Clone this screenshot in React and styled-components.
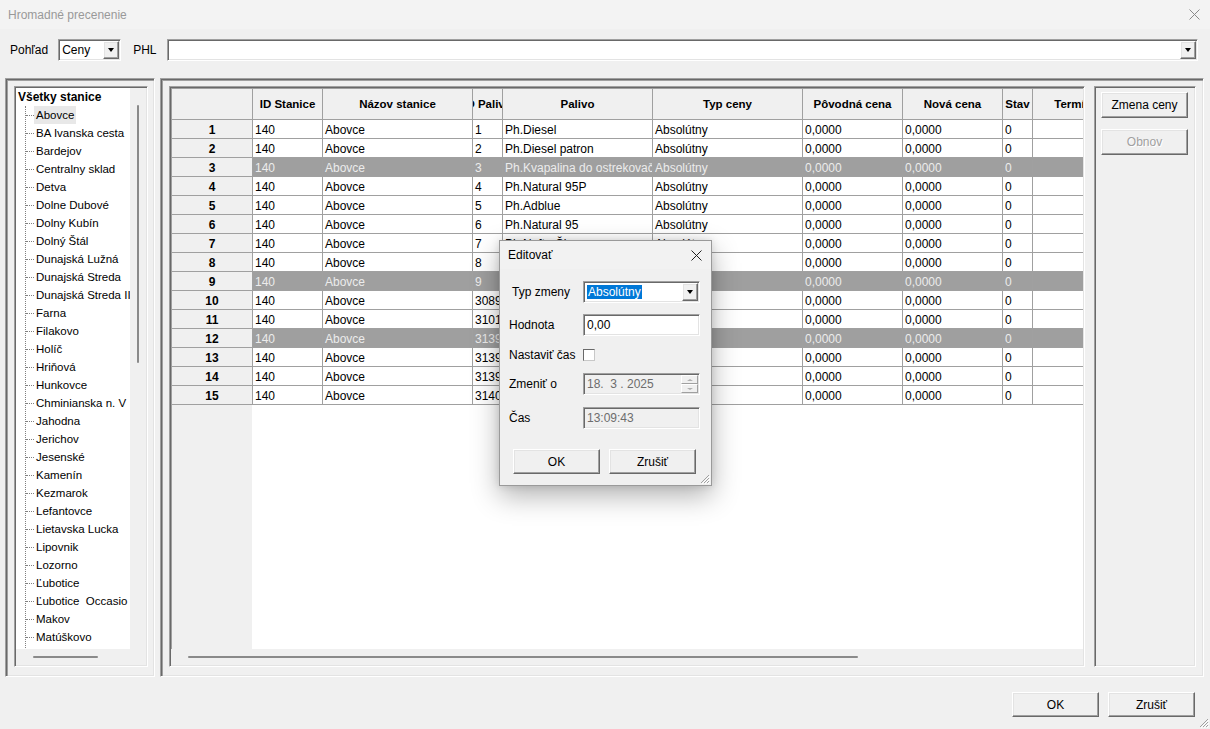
import React from 'react';
import styled, { createGlobalStyle, css } from 'styled-components';

const Global = createGlobalStyle`
  html, body { margin: 0; padding: 0; background: #f0f0f0; }
  body { font-family: "Liberation Sans", Arial, sans-serif; font-size: 12px; color: #000; }
  * { box-sizing: border-box; }
`;

const sunken = css`
  border: 1px solid;
  border-color: #a0a0a0 #fff #fff #a0a0a0;
  box-shadow: inset 1px 1px #696969, inset -1px -1px #e3e3e3;
`;

const raised = css`
  background: #f0f0f0;
  border: 1px solid;
  border-color: #fff #696969 #696969 #fff;
  box-shadow: inset -1px -1px #a0a0a0, inset 1px 1px #e3e3e3;
`;

const Window = styled.div`
  position: relative;
  width: 1210px;
  height: 729px;
  display: flex;
  flex-direction: column;
  background: #f0f0f0;
  overflow: hidden;
`;

const TitleBar = styled.div`
  height: 29px;
  flex-shrink: 0;
  background: #f3f3f3;
  display: flex;
  align-items: center;
  justify-content: space-between;
  padding: 0 10px 0 8px;
  color: #999;
  font-size: 12px;
`;

const Toolbar = styled.div`
  height: 49px;
  flex-shrink: 0;
  display: flex;
  align-items: flex-start;
  padding: 10px 12px 0 10px;
  gap: 10px;
`;

const ToolLabel = styled.span`
  line-height: 22px;
  white-space: nowrap;
  margin-left: ${p => p.$ml || 0}px;
`;

const Combo = styled.div`
  ${sunken};
  background: ${p => (p.$disabled ? '#f0f0f0' : '#fff')};
  height: ${p => p.$h || 22}px;
  width: ${p => (p.$w ? `${p.$w}px` : 'auto')};
  flex: ${p => (p.$grow ? 1 : 'none')};
  display: flex;
  align-items: center;
  padding: 1px 1px 1px ${p => p.$pl ?? 3}px;
  color: ${p => (p.$disabled ? '#6d6d6d' : '#000')};
`;

const ComboText = styled.span`
  flex: 1;
  white-space: nowrap;
  overflow: hidden;
`;

const Highlight = styled.span`
  background: #0078d7;
  color: #fff;
  padding: 1px 1px 2px;
`;

const DropBtn = styled.div`
  ${raised};
  width: 16px;
  height: 18px;
  flex-shrink: 0;
  display: flex;
  align-items: center;
  justify-content: center;
`;

const Tri = styled.span`
  width: 0;
  height: 0;
  border-left: 3.5px solid transparent;
  border-right: 3.5px solid transparent;
  ${p => (p.$up ? 'border-bottom' : 'border-top')}: ${p => p.$size || 4}px solid ${p => p.$color || '#000'};
`;

const Main = styled.div`
  height: 599px;
  flex-shrink: 0;
  display: flex;
  gap: 5px;
  padding-left: 5px;
`;

const OuterFrame = styled.div`
  border: 1px solid;
  border-color: #a0a0a0 #fff #fff #a0a0a0;
  box-shadow: inset 1px 1px #696969, inset 2px 2px #a0a0a0, inset -1px -1px #e3e3e3;
  padding: 7px ${p => p.$pr}px 9px 8px;
  width: ${p => p.$w}px;
  display: flex;
  gap: 9px;
`;

const InnerFrame = styled.div`
  border: 1px solid;
  border-color: #a0a0a0 #fff #fff #a0a0a0;
  box-shadow: inset 1px 1px #696969, inset -1px -1px #e3e3e3;
  padding: 1px;
  width: ${p => p.$w}px;
  flex-shrink: 0;
  display: flex;
  flex-direction: column;
  overflow: hidden;
`;

const ScrollArea = styled.div`
  flex: 1;
  display: flex;
  min-height: 0;
`;

const HScroll = styled.div`
  height: 16px;
  flex-shrink: 0;
  background: #f0f0f0;
  display: flex;
  align-items: center;
`;

const HThumb = styled.div`
  margin-left: ${p => p.$offset}px;
  width: ${p => p.$len}px;
  height: 2px;
  border-radius: 1px;
  background: #8a8a8a;
`;

const VScroll = styled.div`
  width: 16px;
  flex-shrink: 0;
  background: #f0f0f0;
  padding: 17px 0 0 7px;
`;

const VThumb = styled.div`
  width: 2px;
  height: ${p => p.$len}px;
  border-radius: 1px;
  background: #8a8a8a;
`;

/* Tree */
const Tree = styled.div`
  flex: 1;
  background: #fff;
  display: flex;
  flex-direction: column;
  overflow: hidden;
  white-space: nowrap;
  font-size: 11.5px;
`;

const TreeRoot = styled.div`
  height: 18px;
  line-height: 18px;
  padding-left: 2px;
  font-weight: bold;
  font-size: 12px;
  flex-shrink: 0;
`;

const TreeBranch = styled.div`
  flex: 1;
  margin-left: 9px;
  border-left: 1px dotted #808080;
  display: flex;
  flex-direction: column;
`;

const TreeItem = styled.div`
  height: 18px;
  display: flex;
  align-items: center;
  flex-shrink: 0;
  &::before {
    content: '';
    width: 8px;
    border-top: 1px dotted #808080;
    flex-shrink: 0;
  }
`;

const TreeText = styled.span`
  padding: 2px;
  line-height: 14px;
  white-space: pre;
  background: ${p => (p.$selected ? '#e8e8e8' : 'transparent')};
`;

/* Grid */
const Table = styled.div`
  flex: 1;
  background: #fff;
  border-top: 1px solid #a0a0a0;
  border-left: 1px solid #a0a0a0;
  display: flex;
  flex-direction: column;
  overflow: hidden;
  min-height: 0;
`;

const HeaderRow = styled.div`
  display: flex;
  height: 31px;
  flex-shrink: 0;
`;

const HeaderCell = styled.div`
  width: ${p => p.$w}px;
  flex-shrink: 0;
  height: 31px;
  background: #f0f0f0;
  border-right: 1px solid #a0a0a0;
  border-bottom: 1px solid #a0a0a0;
  display: flex;
  align-items: center;
  justify-content: center;
  overflow: hidden;
  font-weight: bold;
  font-size: 11.5px;
  white-space: nowrap;
`;

const HeaderText = styled.span`
  flex-shrink: 0;
`;

const DataRow = styled.div`
  display: flex;
  height: 19px;
  flex-shrink: 0;
`;

const RowHead = styled.div`
  width: 81px;
  flex-shrink: 0;
  background: #f0f0f0;
  border-right: 1px solid #a0a0a0;
  border-bottom: 1px solid #a0a0a0;
  text-align: center;
  font-weight: bold;
  line-height: 20px;
  overflow: hidden;
`;

const Cell = styled.div`
  width: ${p => p.$w}px;
  flex-shrink: 0;
  border-right: 1px solid #a0a0a0;
  border-bottom: 1px solid #a0a0a0;
  padding-left: 2px;
  line-height: 20px;
  white-space: nowrap;
  overflow: hidden;
  background: ${p => (p.$selected ? '#9f9f9f' : '#fff')};
  color: ${p => (p.$selected ? '#ececec' : '#000')};
`;

const Filler = styled.div`
  flex: 1;
  display: flex;
`;

const FillerHead = styled.div`
  width: 80px;
  background: #f0f0f0;
`;

const SidePanel = styled.div`
  border: 1px solid;
  border-color: #a0a0a0 #fff #fff #a0a0a0;
  box-shadow: inset 1px 1px #696969, inset -1px -1px #e3e3e3;
  width: 102px;
  flex-shrink: 0;
  padding: 5px 6px;
  display: flex;
  flex-direction: column;
  gap: 11px;
`;

const PushButton = styled.div`
  ${raised};
  width: 87px;
  height: ${p => p.$h || 25}px;
  flex-shrink: 0;
  display: flex;
  align-items: center;
  justify-content: center;
  color: ${p => (p.$disabled ? '#a0a0a0' : '#000')};
  text-shadow: ${p => (p.$disabled ? '1px 1px #fff' : 'none')};
  white-space: nowrap;
`;

const BottomBar = styled.div`
  flex: 1;
  display: flex;
  justify-content: flex-end;
  align-items: flex-start;
  gap: 9px;
  padding: 15px 15px 0 0;
`;

/* Dialog */
const Dialog = styled.div`
  position: absolute;
  left: 499px;
  top: 240px;
  width: 213px;
  height: 246px;
  background: #f0f0f0;
  border: 1px solid #9a9a9a;
  box-shadow: 0 10px 26px rgba(0, 0, 0, 0.3), 0 0 8px rgba(0, 0, 0, 0.12);
  display: flex;
  flex-direction: column;
`;

const DlgTitle = styled.div`
  height: 28px;
  flex-shrink: 0;
  display: flex;
  align-items: center;
  justify-content: space-between;
  padding: 0 9px 0 8px;
  background: #f2f2f2;
`;

const DlgBody = styled.div`
  padding: 12px 0 0 9px;
  display: flex;
  flex-direction: column;
`;

const FormRow = styled.div`
  display: flex;
  align-items: center;
  height: 22px;
  margin-top: ${p => p.$mt || 0}px;
`;

const FormLabel = styled.span`
  width: 74px;
  flex-shrink: 0;
  padding-left: ${p => p.$indent || 0}px;
  white-space: nowrap;
`;

const Checkbox = styled.span`
  width: 12px;
  height: 12px;
  background: #fff;
  border: 1px solid;
  border-color: #696969 #c8c8c8 #c8c8c8 #696969;
`;

const SpinBox = styled.div`
  width: 17px;
  height: 18px;
  display: flex;
  flex-direction: column;
  flex-shrink: 0;
`;

const SpinHalf = styled.div`
  flex: 1;
  border: 1px solid;
  border-color: #fff #a0a0a0 #a0a0a0 #fff;
  display: flex;
  align-items: center;
  justify-content: center;
`;

const DlgButtons = styled.div`
  display: flex;
  gap: 9px;
  margin-top: 20px;
  padding-left: 4px;
`;

const Grip = styled.svg`
  position: absolute;
  right: 1px;
  bottom: 1px;
`;

const CloseX = ({ color }) => (
  <svg width="11" height="11" viewBox="0 0 11 11">
    <path d="M0.5 0.5 L10.5 10.5 M10.5 0.5 L0.5 10.5" stroke={color} strokeWidth="1" />
  </svg>
);

const GripIcon = () => (
  <Grip width="12" height="12" viewBox="0 0 12 12">
    <path d="M11 3 L3 11 M11 6 L6 11 M11 9 L9 11" stroke="#a0a0a0" strokeWidth="1" />
    <path d="M12 4 L4 12 M12 7 L7 12 M12 10 L10 12" stroke="#fff" strokeWidth="1" />
  </Grip>
);

const stations = [
  'Abovce', 'BA Ivanska cesta', 'Bardejov', 'Centralny sklad', 'Detva', 'Dolne Dubové',
  'Dolny Kubín', 'Dolný Štál', 'Dunajská Lužná', 'Dunajská Streda', 'Dunajská Streda II',
  'Farna', 'Filakovo', 'Holíč', 'Hriňová', 'Hunkovce', 'Chminianska n. V', 'Jahodna',
  'Jerichov', 'Jesenské', 'Kamenín', 'Kezmarok', 'Lefantovce', 'Lietavska Lucka',
  'Lipovnik', 'Lozorno', 'Ľubotice', 'Ľubotice  Occasio', 'Makov', 'Matúškovo', 'Medzev',
];

const columns = [
  { key: 'id', title: 'ID Stanice', w: 70 },
  { key: 'name', title: 'Názov stanice', w: 150 },
  { key: 'pid', title: 'ID Palivo', w: 30 },
  { key: 'fuel', title: 'Palivo', w: 150 },
  { key: 'type', title: 'Typ ceny', w: 150 },
  { key: 'orig', title: 'Pôvodná cena', w: 100 },
  { key: 'nw', title: 'Nová cena', w: 100 },
  { key: 'state', title: 'Stav', w: 30 },
  { key: 'term', title: 'Termín zmeny', w: 120 },
];

const pids = ['1', '2', '3', '4', '5', '6', '7', '8', '9', '3089', '3101', '3139', '3139', '3139', '3140'];
const fuels = [
  'Ph.Diesel', 'Ph.Diesel patron', 'Ph.Kvapalina do ostrekovača', 'Ph.Natural 95P', 'Ph.Adblue',
  'Ph.Natural 95', 'Ph.Nafta Čierna', 'Ph.Natural 98', 'Ph.LPG', 'Ph.Diesel Plus',
  'Ph.Natural 100', 'Ph.CNG', 'Ph.Diesel Zima', 'Ph.Natural E10', 'Ph.Olej',
];
const selectedRows = [3, 9, 12];

const rows = pids.map((pid, i) => ({
  n: i + 1,
  selected: selectedRows.includes(i + 1),
  id: '140',
  name: 'Abovce',
  pid,
  fuel: fuels[i],
  type: 'Absolútny',
  orig: '0,0000',
  nw: '0,0000',
  state: '0',
  term: '',
}));

export default function App() {
  return (
    <>
      <Global />
      <Window>
        <TitleBar>
          <span>Hromadné precenenie</span>
          <CloseX color="#8a8a8a" />
        </TitleBar>

        <Toolbar>
          <ToolLabel>Pohľad</ToolLabel>
          <Combo $w={63}>
            <ComboText>Ceny</ComboText>
            <DropBtn><Tri /></DropBtn>
          </Combo>
          <ToolLabel $ml={2}>PHL</ToolLabel>
          <Combo $grow>
            <ComboText />
            <DropBtn><Tri /></DropBtn>
          </Combo>
        </Toolbar>

        <Main>
          <OuterFrame $w={150} $pr={6}>
            <InnerFrame $w={134}>
              <ScrollArea>
                <Tree>
                  <TreeRoot>Všetky stanice</TreeRoot>
                  <TreeBranch>
                    {stations.map((s, i) => (
                      <TreeItem key={s}>
                        <TreeText $selected={i === 0}>{s}</TreeText>
                      </TreeItem>
                    ))}
                  </TreeBranch>
                </Tree>
                <VScroll><VThumb $len={258} /></VScroll>
              </ScrollArea>
              <HScroll><HThumb $offset={17} $len={65} /></HScroll>
            </InnerFrame>
          </OuterFrame>

          <OuterFrame $w={1044} $pr={7}>
            <InnerFrame $w={916}>
              <Table>
                <HeaderRow>
                  <HeaderCell $w={81} />
                  {columns.map(c => (
                    <HeaderCell key={c.key} $w={c.w}>
                      <HeaderText>{c.title}</HeaderText>
                    </HeaderCell>
                  ))}
                </HeaderRow>
                {rows.map(r => (
                  <DataRow key={r.n}>
                    <RowHead>{r.n}</RowHead>
                    {columns.map(c => (
                      <Cell key={c.key} $w={c.w} $selected={r.selected}>{r[c.key]}</Cell>
                    ))}
                  </DataRow>
                ))}
                <Filler><FillerHead /></Filler>
              </Table>
              <HScroll><HThumb $offset={17} $len={670} /></HScroll>
            </InnerFrame>
            <SidePanel>
              <PushButton $h={26}>Zmena ceny</PushButton>
              <PushButton $h={26} $disabled>Obnov</PushButton>
            </SidePanel>
          </OuterFrame>
        </Main>

        <BottomBar>
          <PushButton>OK</PushButton>
          <PushButton>Zrušiť</PushButton>
        </BottomBar>
        <GripIcon />

        <Dialog>
          <DlgTitle>
            <span>Editovať</span>
            <CloseX color="#222" />
          </DlgTitle>
          <DlgBody>
            <FormRow>
              <FormLabel $indent={3}>Typ zmeny</FormLabel>
              <Combo $w={117}>
                <ComboText><Highlight>Absolútny</Highlight></ComboText>
                <DropBtn><Tri /></DropBtn>
              </Combo>
            </FormRow>
            <FormRow $mt={11}>
              <FormLabel>Hodnota</FormLabel>
              <Combo $w={117}><ComboText>0,00</ComboText></Combo>
            </FormRow>
            <FormRow $mt={8}>
              <FormLabel>Nastaviť čas</FormLabel>
              <Checkbox />
            </FormRow>
            <FormRow $mt={7}>
              <FormLabel>Zmeniť o</FormLabel>
              <Combo $w={117} $disabled>
                <ComboText>18.&nbsp;&nbsp;3 . 2025</ComboText>
                <SpinBox>
                  <SpinHalf><Tri $up $size={2} $color="#b0b0b0" /></SpinHalf>
                  <SpinHalf><Tri $size={2} $color="#b0b0b0" /></SpinHalf>
                </SpinBox>
              </Combo>
            </FormRow>
            <FormRow $mt={12}>
              <FormLabel>Čas</FormLabel>
              <Combo $w={117} $disabled><ComboText>13:09:43</ComboText></Combo>
            </FormRow>
            <DlgButtons>
              <PushButton>OK</PushButton>
              <PushButton>Zrušiť</PushButton>
            </DlgButtons>
          </DlgBody>
          <GripIcon />
        </Dialog>
      </Window>
    </>
  );
}
